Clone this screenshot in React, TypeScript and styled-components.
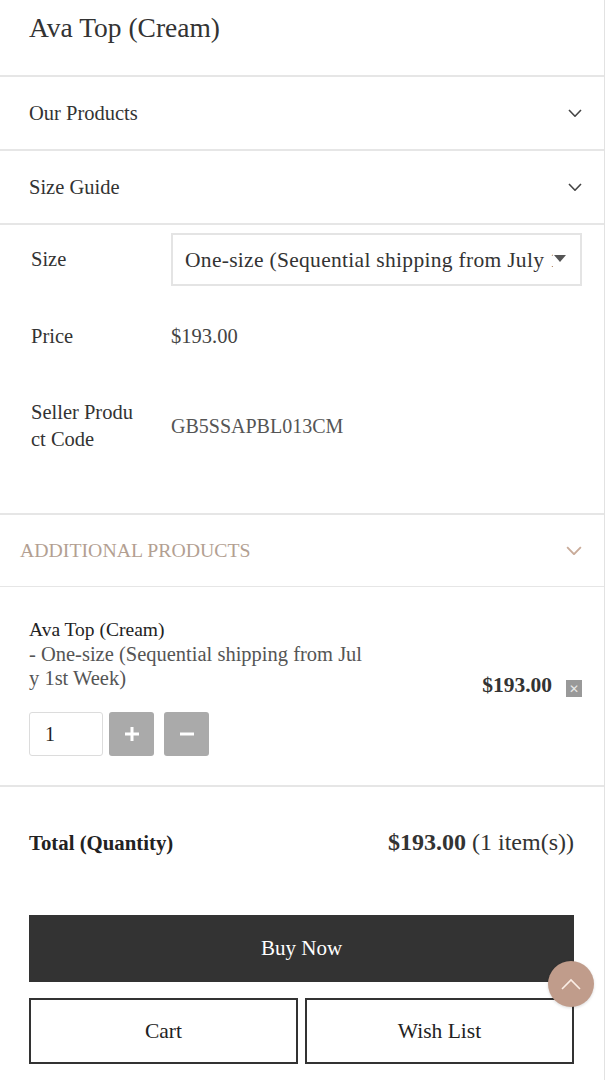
import React from 'react';
import styled, {createGlobalStyle} from 'styled-components';

const GlobalStyle = createGlobalStyle`
  body {
    margin: 0;
    background: #fff;
    font-family: "Liberation Serif", "Times New Roman", serif;
    color: #333;
  }
`;

const Page = styled.div`
  width: 604px;
  min-height: 1080px;
  border-right: 1px solid #e2e2e2;
  overflow: hidden;
`;

const Title = styled.h1`
  margin: 0;
  padding: 13px 29px 32px;
  font-size: 27.5px;
  line-height: 30px;
  font-weight: normal;
  color: #333;
  border-bottom: 2px solid #e6e6e6;
`;

const AccordionRow = styled.div<{ $accent?: boolean }>`
  display: flex;
  align-items: center;
  justify-content: space-between;
  height: ${p => p.$accent ? 71 : 72}px;
  padding: ${p => p.$accent ? '0 22px 0 20px' : '0 22px 0 29px'};
  border-bottom: ${p => p.$accent ? '1px' : '2px'} solid #e6e6e6;
  font-size: ${p => p.$accent ? '19.8px' : '20.5px'};
  color: ${p => p.$accent ? '#b39f92' : '#333'};
`;

const InfoSection = styled.div`
  padding: 8px 22px 60px 31px;
  border-bottom: 2px solid #e6e6e6;
`;

const InfoRow = styled.div<{ $top?: number; $height: number }>`
  display: grid;
  grid-template-columns: 110px minmax(0, 1fr);
  column-gap: 30px;
  align-items: center;
  margin-top: ${p => p.$top || 0}px;
  min-height: ${p => p.$height}px;
`;

const Label = styled.div`
  font-size: 20.5px;
  line-height: 27px;
  color: #333;
  word-break: break-all;
`;

const Value = styled.div`
  font-size: 20.5px;
  line-height: 27px;
  color: #444;
`;

const Code = styled(Value)`
  font-size: 20px;
  color: #555;
`;

const SelectBox = styled.div`
  min-width: 0;
  height: 53px;
  box-sizing: border-box;
  border: 2px solid #e4e4e4;
  padding: 2px 14px 0 12px;
  display: flex;
  align-items: center;
  gap: 1px;
`;

const SelectText = styled.span`
  flex: 1;
  min-width: 0;
  overflow: hidden;
  white-space: nowrap;
  font-size: 21.5px;
  letter-spacing: 0.3px;
  color: #333;
`;

const SelectArrow = styled.span`
  flex: none;
  width: 0;
  height: 0;
  margin-top: -4px;
  border-left: 6px solid transparent;
  border-right: 6px solid transparent;
  border-top: 7px solid #555;
`;

const ItemSection = styled.div`
  padding: 31px 22px 29px 29px;
  border-bottom: 2px solid #e6e6e6;
`;

const ItemTop = styled.div`
  display: flex;
  justify-content: space-between;
  align-items: flex-end;
`;

const ItemInfo = styled.div`
  width: 338px;
  line-height: 24px;
  word-break: break-all;
`;

const ItemName = styled.div`
  font-size: 19.5px;
  color: #222;
`;

const ItemOption = styled.div`
  font-size: 20.5px;
  color: #555;
`;

const ItemPrice = styled.div`
  display: flex;
  align-items: center;
  gap: 14px;
  font-size: 21.5px;
  font-weight: bold;
  color: #333;
  margin-bottom: -8px;
`;

const RemoveBox = styled.span`
  width: 16px;
  height: 17px;
  background: #999;
  color: #e8e8e8;
  font-size: 12px;
  font-weight: normal;
  display: flex;
  align-items: center;
  justify-content: center;
  margin-top: 6px;
  font-family: "DejaVu Sans", sans-serif;
`;

const QtyRow = styled.div`
  display: flex;
  gap: 6px;
  margin-top: 22px;
`;

const QtyInput = styled.div`
  width: 74px;
  height: 44px;
  box-sizing: border-box;
  border: 1px solid #dcdcdc;
  border-radius: 3px;
  padding-left: 15px;
  display: flex;
  align-items: center;
  font-size: 20px;
  color: #222;
`;

const QtyButton = styled.div<{ $gap?: number }>`
  width: 45px;
  height: 44px;
  border-radius: 3px;
  background: #aaa;
  margin-left: ${p => p.$gap || 0}px;
  display: flex;
  align-items: center;
  justify-content: center;
`;

const TotalSection = styled.div`
  padding: 40px 30px 0 29px;
`;

const TotalRow = styled.div`
  display: flex;
  justify-content: space-between;
  align-items: baseline;
  line-height: 30px;
`;

const TotalLabel = styled.div`
  font-size: 20.8px;
  font-weight: bold;
  color: #222;
`;

const TotalValue = styled.div`
  font-size: 24px;
  color: #333;
`;

const TotalPrice = styled.span`
  font-weight: bold;
`;

const BuyNow = styled.button`
  display: block;
  width: 100%;
  height: 67px;
  margin-top: 57px;
  border: none;
  background: #333;
  color: #fff;
  font-family: inherit;
  font-size: 21px;
`;

const ButtonRow = styled.div`
  display: grid;
  grid-template-columns: 1fr 1fr;
  gap: 7px;
  margin-top: 16px;
`;

const OutlineButton = styled.button`
  height: 66px;
  border: 2px solid #333;
  background: #fff;
  color: #222;
  font-family: inherit;
  font-size: 21.5px;
`;

const ScrollTop = styled.div`
  position: fixed;
  right: 11px;
  bottom: 73px;
  width: 46px;
  height: 46px;
  border-radius: 50%;
  background: #c09c8b;
  display: flex;
  align-items: center;
  justify-content: center;
  box-shadow: 0 1px 3px rgba(0, 0, 0, 0.15);
`;

const Chevron = ({color = '#444', width = 14}: { color?: string; width?: number }) =>
  <svg width={width} height={width * 0.6} viewBox="0 0 14 8.4" fill="none">
    <polyline points="1,1 7,7.2 13,1" stroke={color} strokeWidth="1.6"/>
  </svg>;

export default function App() {
  return <Page>
    <GlobalStyle/>
    <Title>Ava Top (Cream)</Title>

    <AccordionRow>Our Products<Chevron/></AccordionRow>
    <AccordionRow>Size Guide<Chevron/></AccordionRow>

    <InfoSection>
      <InfoRow $height={53}>
        <Label>Size</Label>
        <SelectBox>
          <SelectText>One-size (Sequential shipping from July 1st Week)</SelectText>
          <SelectArrow/>
        </SelectBox>
      </InfoRow>
      <InfoRow $top={24} $height={53}>
        <Label>Price</Label>
        <Value>$193.00</Value>
      </InfoRow>
      <InfoRow $top={36} $height={54}>
        <Label>Seller Product Code</Label>
        <Code>GB5SSAPBL013CM</Code>
      </InfoRow>
    </InfoSection>

    <AccordionRow $accent>
      ADDITIONAL PRODUCTS
      <Chevron color="#c9ab99" width={16}/>
    </AccordionRow>

    <ItemSection>
      <ItemTop>
        <ItemInfo>
          <ItemName>Ava Top (Cream)</ItemName>
          <ItemOption>- One-size (Sequential shipping from July 1st Week)</ItemOption>
        </ItemInfo>
        <ItemPrice>
          $193.00
          <RemoveBox>✕</RemoveBox>
        </ItemPrice>
      </ItemTop>
      <QtyRow>
        <QtyInput>1</QtyInput>
        <QtyButton>
          <svg width="16" height="16" viewBox="0 0 16 16">
            <path d="M8 1v14M1 8h14" stroke="#fff" strokeWidth="3"/>
          </svg>
        </QtyButton>
        <QtyButton $gap={4}>
          <svg width="14" height="4" viewBox="0 0 14 4">
            <path d="M0 2h14" stroke="#fff" strokeWidth="3"/>
          </svg>
        </QtyButton>
      </QtyRow>
    </ItemSection>

    <TotalSection>
      <TotalRow>
        <TotalLabel>Total (Quantity)</TotalLabel>
        <TotalValue><TotalPrice>$193.00</TotalPrice> (1 item(s))</TotalValue>
      </TotalRow>
      <BuyNow>Buy Now</BuyNow>
      <ButtonRow>
        <OutlineButton>Cart</OutlineButton>
        <OutlineButton>Wish List</OutlineButton>
      </ButtonRow>
    </TotalSection>

    <ScrollTop>
      <svg width="20" height="12" viewBox="0 0 20 12" fill="none">
        <polyline points="1,11 10,2 19,11" stroke="#fbeee6" strokeWidth="1.6"/>
      </svg>
    </ScrollTop>
  </Page>;
}
